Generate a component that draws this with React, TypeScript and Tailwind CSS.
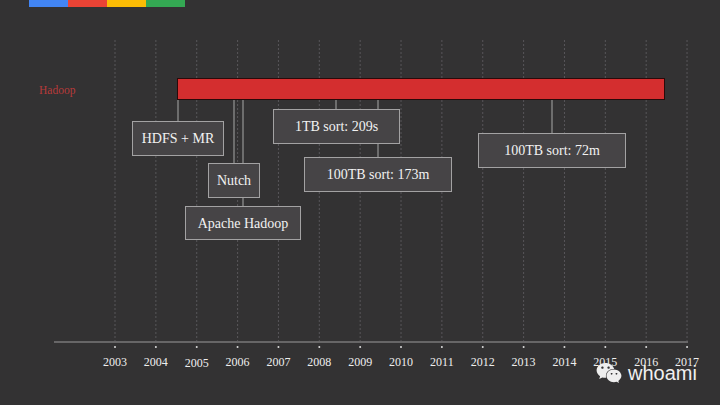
import { FaWeixin } from 'react-icons/fa';

const years = Array.from({ length: 15 }, (_, i) => 2003 + i);
const gx = (i: number) => 115 + i * 40.86;

const events = [
  { label: 'HDFS + MR', left: 132, top: 121, w: 92, h: 35 },
  { label: 'Nutch', left: 208, top: 163, w: 52, h: 35 },
  { label: 'Apache Hadoop', left: 185, top: 206, w: 116, h: 34 },
  { label: '1TB sort: 209s', left: 273, top: 109, w: 127, h: 35 },
  { label: '100TB sort: 173m', left: 304, top: 157, w: 148, h: 35 },
  { label: '100TB sort: 72m', left: 478, top: 133, w: 148, h: 35 },
];

// connector lines: x, from y, to y
const links = [
  [178, 99, 121],
  [234, 99, 163],
  [243, 99, 206],
  [336, 99, 109],
  [378, 99, 157],
  [552, 99, 133],
];

function Chart() {
  return (
    <div className="relative w-[720px] h-[405px]">
      <svg className="absolute inset-0" width={720} height={405}>
        {years.map((y, i) => (
          <line key={y} x1={gx(i)} x2={gx(i)} y1={40} y2={342} stroke="#58565a" strokeWidth={1} strokeDasharray="2 2" />
        ))}
        {links.map(([x, a, b], i) => (
          <line key={i} x1={x} x2={x} y1={a} y2={b} stroke="#a8a8a8" strokeWidth={1} />
        ))}
        <line x1={54} x2={688} y1={342} y2={342} stroke="#676667" strokeWidth={2} />
        {years.map((y, i) => (
          <circle key={y} cx={gx(i)} cy={347} r={1} fill="#dddddd" />
        ))}
      </svg>

      <div className="absolute left-[29px] top-0 flex h-[7px]">
        <div className="w-[39px] bg-[#4285f4]" />
        <div className="w-[39px] bg-[#ea4335]" />
        <div className="w-[39px] bg-[#fbbc05]" />
        <div className="w-[39px] bg-[#34a853]" />
      </div>

      <div className="absolute left-[39px] top-[85px] text-[11.5px] leading-none text-[#b83a3a]">Hadoop</div>

      <div className="absolute left-[177px] top-[78px] w-[488px] h-[22px] bg-[#d42e2f] border border-[#2a0a0a]" />

      {events.map((e) => (
        <div
          key={e.label}
          className="absolute flex items-center justify-center border border-[#a3a2a3] bg-[#464446] text-[14px] text-[#f2f2f2] whitespace-nowrap"
          style={{ left: e.left, top: e.top, width: e.w, height: e.h }}
        >
          {e.label}
        </div>
      ))}

      {years.map((y, i) => (
        <div
          key={y}
          className="absolute top-[356px] w-[40px] -ml-[20px] text-center text-[12px] leading-none text-[#eeeeee]"
          style={{ left: gx(i), marginTop: y === 2005 ? 1 : 0 }}
        >
          {y}
        </div>
      ))}

      <div className="absolute left-[596px] top-[360px] flex items-center gap-[6px]">
        <FaWeixin className="text-[#eeeeee]" size={26} />
        <span className="font-['Liberation_Sans',Arial,sans-serif] text-[20px] leading-none text-[#f0f0f0]">whoami</span>
      </div>
    </div>
  );
}

export default function App() {
  return (
    <div className="w-[720px] h-[405px] overflow-hidden bg-[#333233] font-['Liberation_Serif','Times_New_Roman',serif]">
      <Chart />
    </div>
  );
}
